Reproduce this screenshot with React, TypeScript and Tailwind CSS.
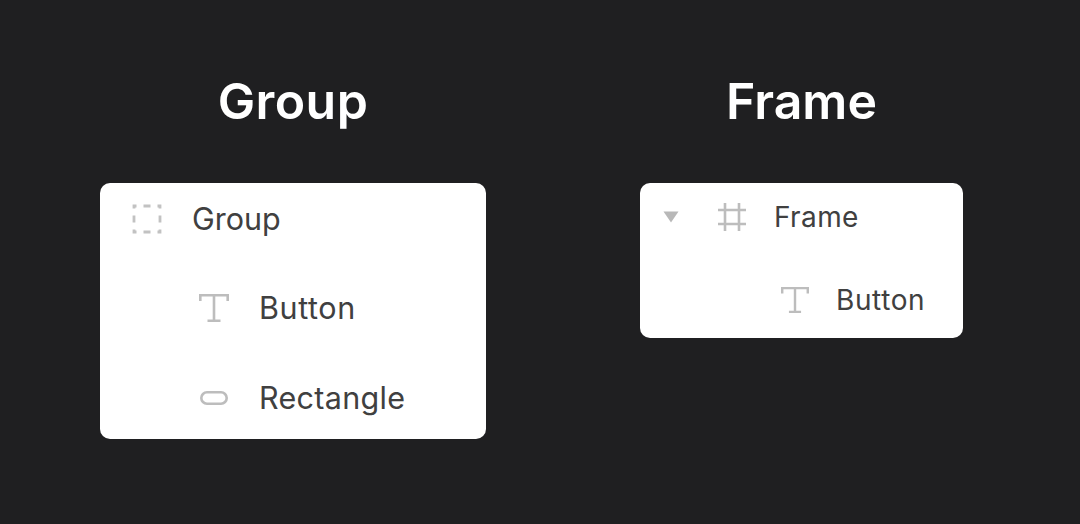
const body = "font-['Inter',sans-serif] text-[#404040]";
const title = "h-[183px] pt-[71px] text-center font-['Inter',sans-serif] font-semibold text-[50px] leading-[60px] text-white";

function GroupIcon() {
  return (
    <svg width="30" height="30" viewBox="0 0 30 30" fill="none" stroke="#c2c2c2" strokeWidth="2.8">
      <path d="M2 4.5V2H4.5M25.5 2H28V4.5M28 25.5V28H25.5M4.5 28H2V25.5M11.5 2H18.5M2 11.5V18.5M28 11.5V18.5M11.5 28H18.5" />
    </svg>
  );
}

function TextIcon({ size }: { size: number }) {
  return (
    <svg width={size} height={size} viewBox="0 0 30 30" fill="none" stroke="#bdbdbd" strokeWidth="2.6">
      <path d="M1.3 8V2.3H28.7V8M15 2.3V27.7M8.5 27.7H21.5" />
    </svg>
  );
}

function RectIcon() {
  return (
    <svg width="28" height="16" viewBox="0 0 28 16" fill="none" stroke="#bdbdbd" strokeWidth="2.6">
      <rect x="1.3" y="2.3" width="25.4" height="11.4" rx="5.7" />
    </svg>
  );
}

function FrameIcon() {
  return (
    <svg width="30" height="30" viewBox="0 0 30 30" fill="none" stroke="#bdbdbd" strokeWidth="2.6">
      <path d="M8 1V29M22 1V29M1 8H29M1 22H29" />
    </svg>
  );
}

export default function App() {
  return (
    <div className="flex w-[1080px] h-[524px] overflow-hidden bg-[#1f1f21] pl-[100px] gap-[154px]">
      <div className="flex flex-col w-[386px]">
        <h2 className={`${title} tracking-[0.4px]`}>Group</h2>
        <div className={`h-[256px] rounded-[10px] bg-white text-[30.5px] leading-[36px] tracking-[0.3px] ${body}`}>
          <div className="flex items-center h-[72px] pl-[32px] gap-[30px]">
            <GroupIcon />
            <span className="tracking-normal">Group</span>
          </div>
          <div className="flex items-center h-[90px] mt-[8px] pl-[99px] gap-[30px]">
            <TextIcon size={30} />
            <span className="tracking-[0.6px]">Button</span>
          </div>
          <div className="flex items-center h-[80px] mt-[5px] pl-[100px] gap-[31px]">
            <RectIcon />
            <span>Rectangle</span>
          </div>
        </div>
      </div>
      <div className="flex flex-col w-[323px]">
        <h2 className={title}>Frame</h2>
        <div className={`h-[155px] rounded-[10px] bg-white text-[28px] leading-[34px] tracking-[0.4px] ${body}`}>
          <div className="flex items-center h-[68px] pl-[23px]">
            <svg width="16" height="12" viewBox="0 0 16 12" fill="#b8b8b8">
              <path d="M0.5 0.5H15.5L8 11.5Z" />
            </svg>
            <span className="ml-[38px]"><FrameIcon /></span>
            <span className="ml-[27px]">Frame</span>
          </div>
          <div className="flex items-center h-[62px] mt-[18px] pl-[141px] gap-[27px]">
            <TextIcon size={28} />
            <span className="tracking-[0.6px]">Button</span>
          </div>
        </div>
      </div>
    </div>
  );
}
